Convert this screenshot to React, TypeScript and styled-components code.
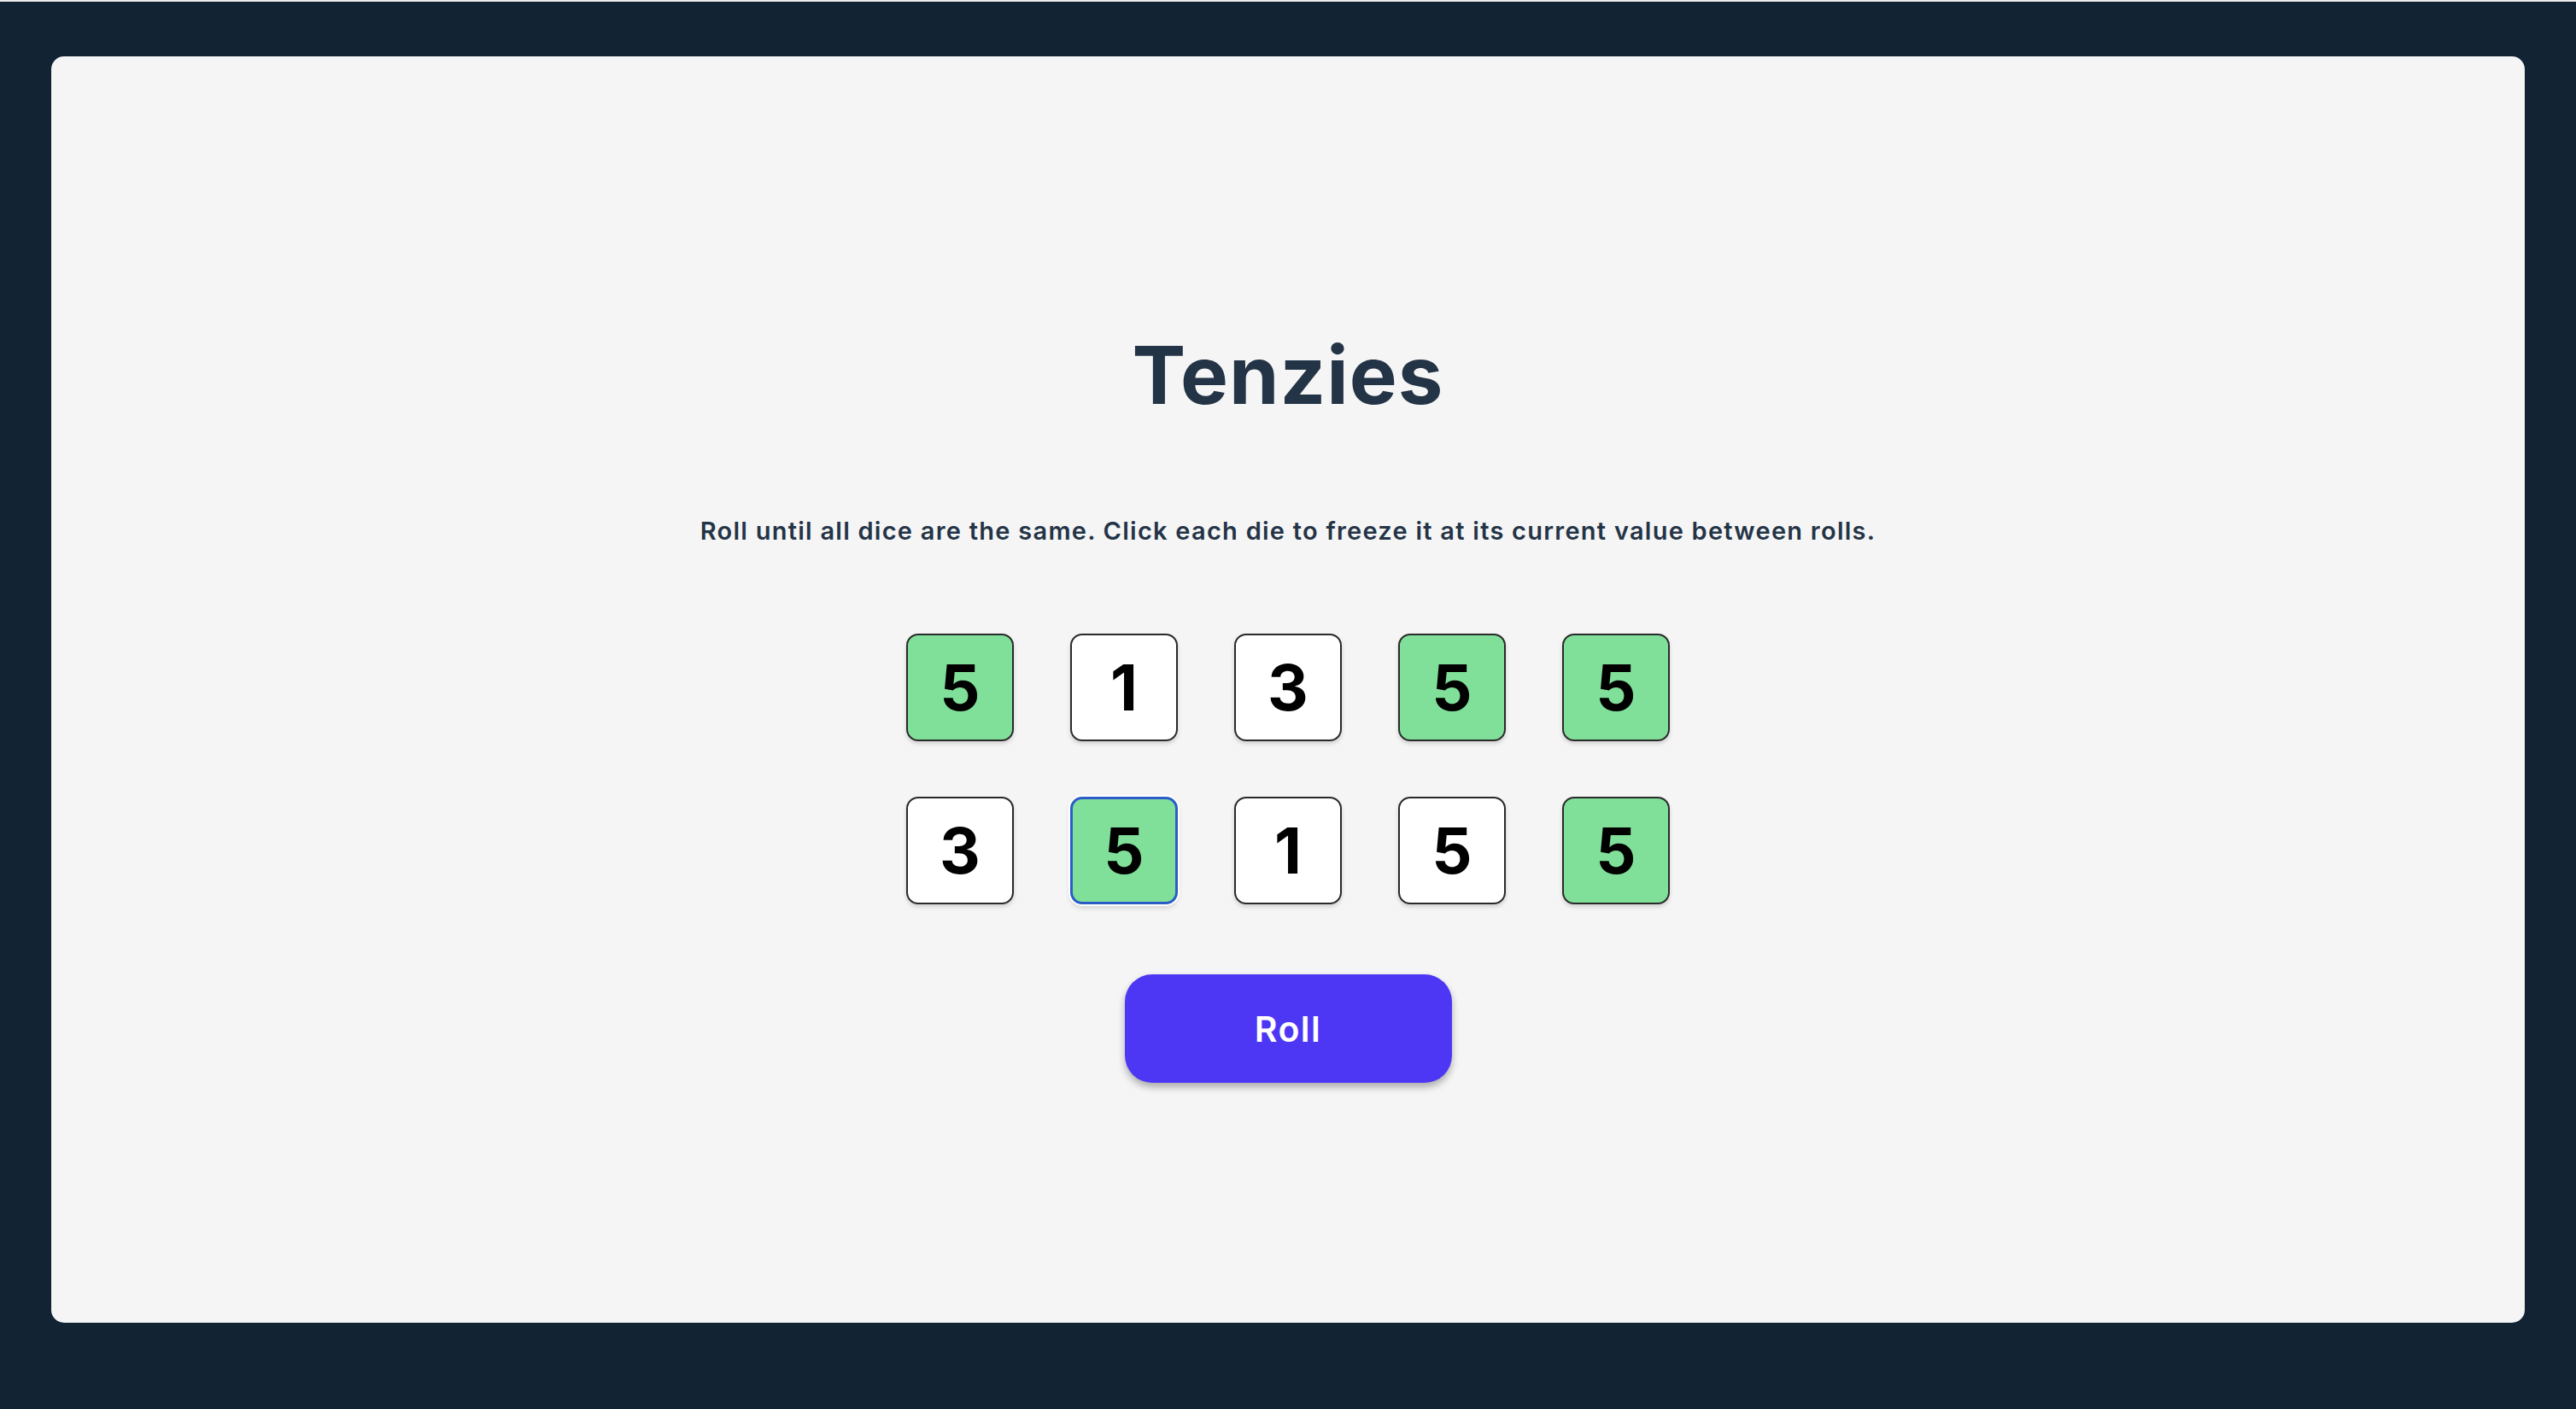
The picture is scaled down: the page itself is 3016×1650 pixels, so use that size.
import React from 'react';
import styled, { createGlobalStyle } from 'styled-components';

const GlobalStyle = createGlobalStyle`
  html, body {
    margin: 0;
    padding: 0;
    background: #ececec;
  }
  * {
    box-sizing: border-box;
  }
`;

const Page = styled.div`
  min-height: 1650px;
  margin-top: 2px;
  padding: 64px 60px 101px;
  background: #122334;
  font-family: Inter, 'Noto Sans', sans-serif;
`;

const Board = styled.main`
  height: 1483px;
  background: #f5f5f5;
  border-radius: 15px;
  display: flex;
  flex-direction: column;
  align-items: center;
  padding-top: 326px;
`;

const Title = styled.h1`
  margin: 0;
  font-size: 94px;
  line-height: 1;
  font-weight: 700;
  letter-spacing: 1px;
  color: #243447;
`;

const Instructions = styled.p`
  margin: 121px 0 0;
  font-size: 29px;
  line-height: 1;
  font-weight: 600;
  letter-spacing: 1.25px;
  color: #243447;
  text-align: center;
`;

const DiceGrid = styled.div`
  margin-top: 106px;
  display: grid;
  grid-template-columns: repeat(5, 126px);
  grid-auto-rows: 126px;
  column-gap: 66px;
  row-gap: 65px;
`;

const Die = styled.button<{ $held: boolean; $focused?: boolean }>`
  width: 126px;
  height: 126px;
  border-radius: 14px;
  border: ${(p) => (p.$focused ? '3px solid #2c5cc8' : '2px solid #2a2a2a')};
  background: ${(p) => (p.$held ? '#80e09a' : '#ffffff')};
  box-shadow: ${(p) =>
    p.$focused
      ? '0 0 0 2px #ffffff, 0 4px 6px rgba(0, 0, 0, 0.15)'
      : '0 3px 5px rgba(0, 0, 0, 0.15)'};
  display: flex;
  align-items: center;
  justify-content: center;
  padding: 0;
  font-family: Inter, 'Noto Sans', sans-serif;
  font-size: 74px;
  font-weight: 700;
  line-height: 1;
  color: #000;
  cursor: pointer;
`;

const RollButton = styled.button`
  margin-top: 82px;
  width: 383px;
  height: 127px;
  border: none;
  border-radius: 32px;
  background: #4d37f5;
  color: #fff;
  font-family: Inter, 'Noto Sans', sans-serif;
  font-size: 41px;
  font-weight: 600;
  letter-spacing: 1.5px;
  box-shadow: 0 5px 8px rgba(0, 0, 0, 0.3);
  cursor: pointer;
`;

const dice = [
  { value: 5, held: true },
  { value: 1, held: false },
  { value: 3, held: false },
  { value: 5, held: true },
  { value: 5, held: true },
  { value: 3, held: false },
  { value: 5, held: true, focused: true },
  { value: 1, held: false },
  { value: 5, held: false },
  { value: 5, held: true },
];

const App: React.FC = () => {
  return (
    <>
      <GlobalStyle />
      <Page>
        <Board>
          <Title>Tenzies</Title>
          <Instructions>
            Roll until all dice are the same. Click each die to freeze it at its current value between rolls.
          </Instructions>
          <DiceGrid>
            {dice.map((die, i) => (
              <Die key={i} $held={die.held} $focused={die.focused}>
                {die.value}
              </Die>
            ))}
          </DiceGrid>
          <RollButton>Roll</RollButton>
        </Board>
      </Page>
    </>
  );
};

export default App;
